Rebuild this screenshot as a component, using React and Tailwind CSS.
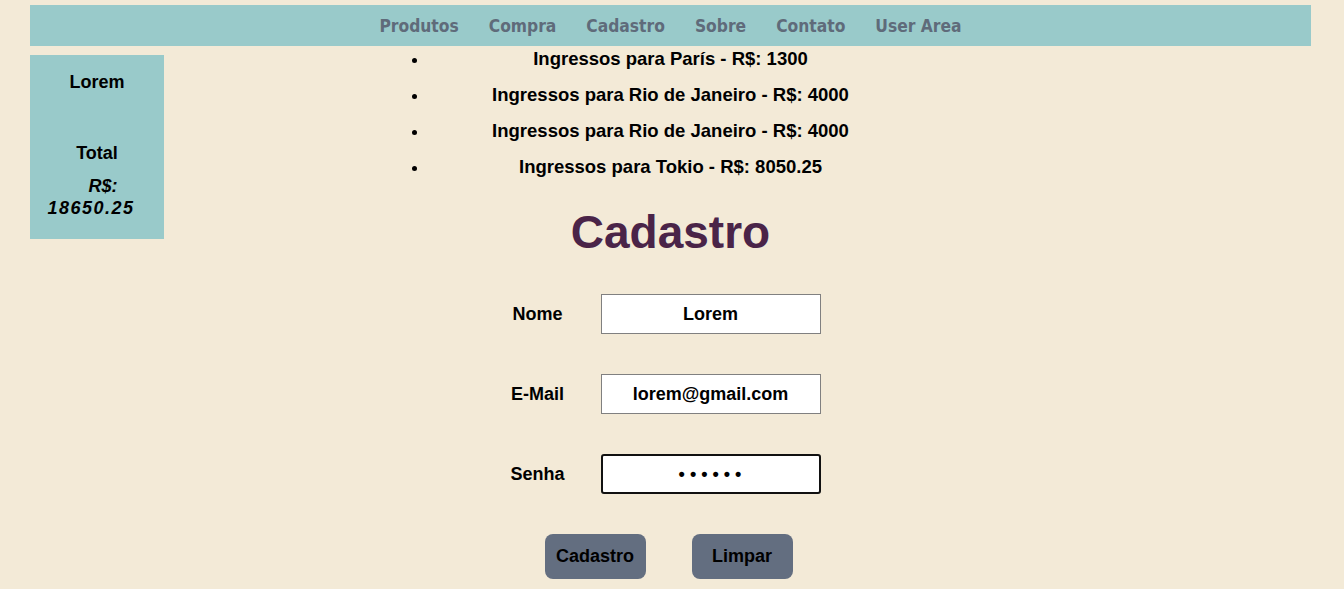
import React, { useState } from "react";

const links = ["Produtos", "Compra", "Cadastro", "Sobre", "Contato", "User Area"];

const items = [
  "Ingressos para París - R$: 1300",
  "Ingressos para Rio de Janeiro - R$: 4000",
  "Ingressos para Rio de Janeiro - R$: 4000",
  "Ingressos para Tokio - R$: 8050.25",
];

const App = () => {
  const [nome, setNome] = useState("Lorem");
  const [email, setEmail] = useState("lorem@gmail.com");
  const [senha, setSenha] = useState("123456");

  const limpar = () => {
    setNome("");
    setEmail("");
    setSenha("");
  };

  return (
    <div className="min-h-[589px] bg-[#f3ead7] pl-[30px] pr-[33px] pt-[5px] font-['Liberation_Sans',sans-serif] font-bold text-black">
      <nav className="flex h-[41px] items-center justify-center gap-[30px] bg-[#99caca] pt-[3px]">
        {links.map((l) => (
          <a
            key={l}
            href="#"
            className="font-['DejaVu_Sans_Condensed',sans-serif] text-[17.3px] text-[#5f6b7a]"
          >
            {l}
          </a>
        ))}
      </nav>

      <div className="grid grid-cols-[134px_1fr_134px]">
        <aside className="mt-[9px] flex h-[184px] flex-col items-center bg-[#99caca] pt-[14px] text-[18px]">
          <p>Lorem</p>
          <p className="mt-[44px]">Total</p>
          <p className="mt-[8px] w-full text-center italic leading-[22px]">
            <span className="block pl-[12px]">R$:</span>
            <span className="block pr-[12px] tracking-[1.5px]">18650.25</span>
          </p>
        </aside>

        <main className="flex flex-col items-center">
          <ul className="w-[484px] list-disc pl-0 pt-[1px] text-[18.5px]">
            {items.map((it, i) => (
              <li key={i} className="h-[36px] text-center leading-[24px] marker:text-[18px]">
                {it}
              </li>
            ))}
          </ul>

          <h1 className="mt-[13px] text-[46px] leading-[56px] text-[#4a2448]">Cadastro</h1>

          <form className="mt-[34px] flex flex-col items-center" onSubmit={(e) => e.preventDefault()}>
            <div className="-ml-[10px] grid grid-cols-[auto_220px] items-center gap-x-[36px] gap-y-[40px] text-[18px]">
              <label className="text-center">Nome</label>
              <input
                className="h-[40px] w-[220px] border border-[#808080] bg-white text-center text-[18px] outline-none"
                value={nome}
                onChange={(e) => setNome(e.target.value)}
              />
              <label className="text-center">E-Mail</label>
              <input
                className="h-[40px] w-[220px] border border-[#808080] bg-white text-center text-[18px] outline-none"
                value={email}
                onChange={(e) => setEmail(e.target.value)}
              />
              <label className="text-center">Senha</label>
              <input
                type="password"
                className="h-[40px] w-[220px] rounded-[3px] border-2 border-[#111] bg-white pl-[4px] text-center text-[18px] tracking-[5px] outline-none"
                value={senha}
                onChange={(e) => setSenha(e.target.value)}
              />
            </div>

            <div className="-ml-[4px] mt-[40px] flex gap-[46px]">
              <button
                type="submit"
                className="h-[45px] w-[101px] rounded-lg bg-[#636e80] text-[18px] text-black"
              >
                Cadastro
              </button>
              <button
                type="button"
                onClick={limpar}
                className="h-[45px] w-[101px] rounded-lg bg-[#636e80] text-[18px] text-black"
              >
                Limpar
              </button>
            </div>
          </form>
        </main>
        <div />
      </div>
    </div>
  );
};

export default App;
